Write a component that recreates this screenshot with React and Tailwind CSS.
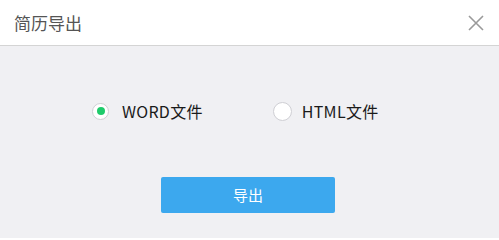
export default function App() {
    const font = { fontFamily: '"Noto Sans CJK SC", "Liberation Sans", sans-serif' };

    return (
        <div className="w-[499px] h-[238px] flex flex-col bg-[#f0f0f3]" style={font}>
            {/* 头部 */}
            <div className="h-[46px] shrink-0 bg-white border-b border-[#d4d4d4] flex items-center justify-between pl-[14px] pr-[15px]">
                <span className="text-[17px] text-[#555] leading-none">简历导出</span>
                <button className="w-[16px] h-[16px] flex items-center justify-center text-[#9a9a9a]">
                    <svg width="16" height="16" viewBox="0 0 16 16" fill="none" stroke="currentColor" strokeWidth="1.6">
                        <path d="M1 1 L15 15 M15 1 L1 15" />
                    </svg>
                </button>
            </div>

            {/* 选项 */}
            <div className="flex items-center pl-[92px] mt-[55px] h-[20px]">
                <label className="flex items-center gap-[13px]">
                    <span className="w-[17px] h-[17px] rounded-full bg-white border border-[#cfcfd4] flex items-center justify-center">
                        <span className="w-[8px] h-[8px] rounded-full bg-[#1fcb6b]" />
                    </span>
                    <span className="text-[16px] text-[#1a1a1a] leading-none tracking-[0.3px]">WORD文件</span>
                </label>
                <label className="flex items-center gap-[10px] ml-[70px]">
                    <span className="w-[19px] h-[19px] rounded-full bg-white border border-[#cfcfd4]" />
                    <span className="text-[16px] text-[#1a1a1a] leading-none tracking-[0.3px]">HTML文件</span>
                </label>
            </div>

            {/* 按钮 */}
            <div className="flex justify-center mt-[56px] pr-[3px]">
                <button className="w-[174px] h-[36px] rounded-[2px] bg-[#3ca8ee] text-white text-[15px]">
                    导出
                </button>
            </div>
        </div>
    );
}
